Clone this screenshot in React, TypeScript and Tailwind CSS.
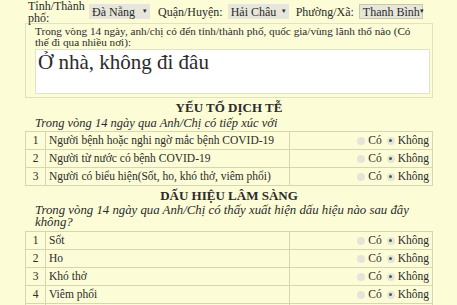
const EPI = [
  'Người bệnh hoặc nghi ngờ mắc bệnh COVID-19',
  'Người từ nước có bệnh COVID-19',
  'Người có biểu hiện(Sốt, ho, khó thở, viêm phổi)',
];

const SIGNS = ['Sốt', 'Ho', 'Khó thở', 'Viêm phổi', 'Mệt mỏi'];

function Select({ value, boxed }: { value: string; boxed?: boolean }) {
  return (
    <div
      className={
        'flex items-center justify-between whitespace-nowrap h-[15px] px-[3px] bg-[#e6e6da] leading-none ' +
        (boxed ? 'border border-[#c9c9a8] w-[64px]' : 'w-[61px]')
      }
    >
      <span>{value}</span>
      <span className="text-[7px]">▾</span>
    </div>
  );
}

function Radios() {
  return (
    <div className="flex items-center justify-end gap-[3px] pr-[3px]">
      <span className="w-[8px] h-[8px] rounded-full bg-[#e4e4d8]" />
      <span>Có</span>
      <span className="ml-[2px] w-[8px] h-[8px] rounded-full bg-[#e4e4d8] flex items-center justify-center">
        <span className="w-[3px] h-[3px] rounded-full bg-[#555]" />
      </span>
      <span>Không</span>
    </div>
  );
}

function Table({ rows }: { rows: string[] }) {
  return (
    <table className="w-full border-collapse text-[11.5px]">
      <tbody>
        {rows.map((r, i) => (
          <tr key={r} className="h-[18px]">
            <td className="w-[20px] border border-[#d6d6b4] text-center align-middle leading-none">{i + 1}</td>
            <td className="w-[244px] border border-[#d6d6b4] pl-[3px] align-middle leading-none">{r}</td>
            <td className="border border-[#d6d6b4] align-middle leading-none">
              <Radios />
            </td>
          </tr>
        ))}
      </tbody>
    </table>
  );
}

export default function App() {
  return (
    <div className="w-[457px] h-[305px] overflow-hidden bg-[#fcfcd6] text-[#2b2b2b] font-['Liberation_Serif',serif]">
      <div className="ml-[25px] w-[408px]">
        <div className="flex items-center gap-[5px] pl-[3px] h-[23px] text-[12px]">
          <span className="w-[56px] leading-[12px]">Tỉnh/Thành phố:</span>
          <Select value="Đà Nẵng" />
          <span className="ml-[3px]">Quận/Huyện:</span>
          <Select value="Hải Châu" />
          <span className="ml-[2px]">Phường/Xã:</span>
          <Select value="Thanh Bình" boxed />
        </div>
        <div className="border border-[#e2e2c0] pl-[9px] pr-[2px] pt-[2px] pb-[3px]">
          <p className="text-[11.2px] leading-[11px] pr-[10px]">
            Trong vòng 14 ngày, anh/chị có đến tỉnh/thành phố, quốc gia/vùng lãnh thổ nào (Có thế đi qua nhiều nơi):
          </p>
          <div className="mt-[1px] h-[45px] bg-white border border-[#e2e2c8] px-[2px] text-[21px] leading-[24px]">
            Ở nhà, không đi đâu
          </div>
        </div>
        <h2 className="mt-[2px] text-center font-bold text-[13px] leading-[16px]">YẾU TỐ DỊCH TỄ</h2>
        <p className="pl-[10px] italic text-[12.5px] leading-[14px] mb-[1px]">
          Trong vòng 14 ngày qua Anh/Chị có tiếp xúc với
        </p>
        <Table rows={EPI} />
        <h2 className="mt-[2px] text-center font-bold text-[13px] leading-[16px]">DẤU HIỆU LÂM SÀNG</h2>
        <p className="pl-[10px] italic text-[12.8px] leading-[12px] mb-[3px]">
          Trong vòng 14 ngày qua Anh/Chị có thấy xuất hiện dấu hiệu nào sau đây không?
        </p>
        <Table rows={SIGNS} />
      </div>
    </div>
  );
}
